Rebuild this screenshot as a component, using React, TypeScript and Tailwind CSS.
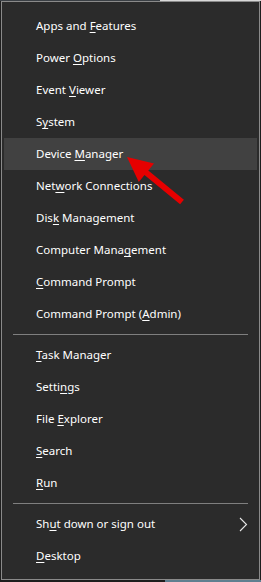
type Item = { pre: string; key: string; post: string; active?: boolean; sub?: boolean };

const groups: Item[][] = [
  [
    { pre: 'Apps and ', key: 'F', post: 'eatures' },
    { pre: 'Power ', key: 'O', post: 'ptions' },
    { pre: 'Event ', key: 'V', post: 'iewer' },
    { pre: 'S', key: 'y', post: 'stem' },
    { pre: 'Device ', key: 'M', post: 'anager', active: true },
    { pre: 'Net', key: 'w', post: 'ork Connections' },
    { pre: 'Dis', key: 'k', post: ' Management' },
    { pre: 'Computer Mana', key: 'g', post: 'ement' },
    { pre: '', key: 'C', post: 'ommand Prompt' },
    { pre: 'Command Prompt (', key: 'A', post: 'dmin)' },
  ],
  [
    { pre: '', key: 'T', post: 'ask Manager' },
    { pre: 'Setti', key: 'n', post: 'gs' },
    { pre: 'File ', key: 'E', post: 'xplorer' },
    { pre: '', key: 'S', post: 'earch' },
    { pre: '', key: 'R', post: 'un' },
  ],
  [
    { pre: 'Sh', key: 'u', post: 't down or sign out', sub: true },
    { pre: '', key: 'D', post: 'esktop' },
  ],
];

function Row({ item }: { item: Item }) {
  return (
    <div
      className={`flex items-center h-[32px] pl-[32px] pr-[8px] text-white ${
        item.active ? 'bg-[#414141]' : ''
      }`}
    >
      <span className="flex-grow whitespace-nowrap">
        {item.pre}
        <u className="underline-offset-[2px]">{item.key}</u>
        {item.post}
      </span>
      {item.sub && (
        <svg width="9" height="15" viewBox="0 0 9 15" className="mr-[1px]">
          <path d="M1 1 L7.5 7.5 L1 14" fill="none" stroke="#e8e8e8" strokeWidth="1.1" />
        </svg>
      )}
    </div>
  );
}

export default function App() {
  return (
    <div
      className="relative w-[261px] h-[582px] bg-[#1e1e1e] overflow-hidden text-[11.5px]"
      style={{ fontFamily: '"Noto Sans", "Open Sans", Arial, sans-serif' }}
    >
      <div className="flex h-[1px]">
        <div className="w-[160px] bg-[#3a3f44]" />
        <div className="flex-grow bg-[#d8d8d8]" />
      </div>
      <div className="ml-[1px] w-[259px] h-[579px] border border-[#8a8a8a] bg-[#2b2b2b] pt-[8px] px-[2px] flex flex-col">
        {groups.map((g, gi) => (
          <div key={gi}>
            {gi > 0 && (
              <div className="py-[4px] px-[9px]">
                <div className="h-[1px] bg-[#7f7f7f]" />
              </div>
            )}
            {g.map((item, i) => (
              <Row key={i} item={item} />
            ))}
          </div>
        ))}
      </div>
      <div className="flex h-[2px]">
        <div className="w-[165px] bg-[#1e1e1e]" />
        <div className="flex-grow bg-[#5f7f90]" />
      </div>
      {/* red pointer arrow */}
      <svg
        className="absolute left-[120px] top-[150px]"
        width="70"
        height="60"
        viewBox="0 0 70 60"
      >
        <polygon
          points="7,7 34,13.5 28.3,20.5 63.9,49.7 60.1,54.3 24.5,25.1 18.8,32.1"
          fill="#e60000"
        />
      </svg>
    </div>
  );
}
